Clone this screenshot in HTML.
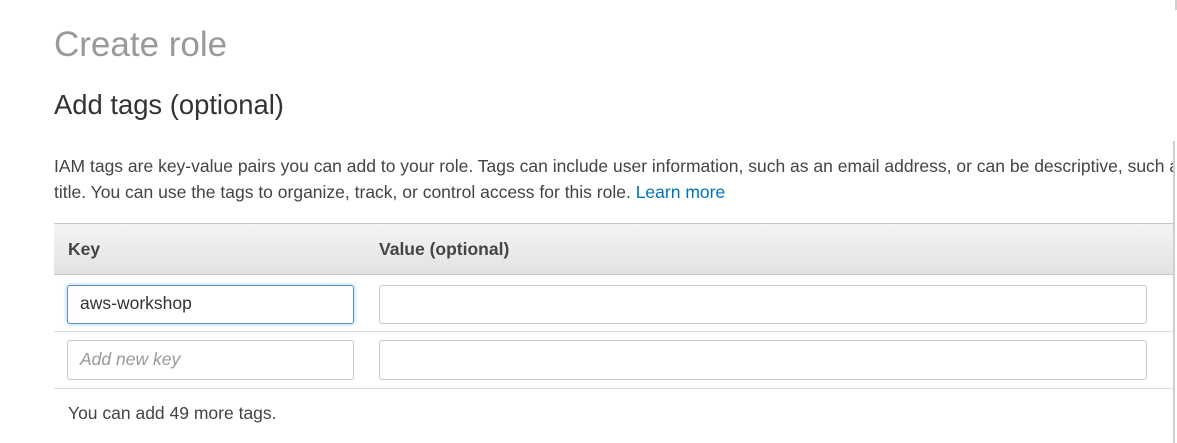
<!DOCTYPE html>
<html><head><style>
html,body{margin:0;padding:0;background:#fff;width:1177px;height:443px;overflow:hidden;font-family:"Liberation Sans",Arial,sans-serif;position:relative}
.a{position:absolute;white-space:nowrap}
.inp{position:absolute;border:1px solid #c8c8c8;border-radius:3px;background:#fff;box-sizing:border-box}
.hr{position:absolute;left:54px;width:1119px;height:1px;background:#dcdcdc}
</style></head><body>
<div class="a" style="left:54px;top:25px;font-size:35px;color:#999">Create role</div>
<div class="a" style="left:54px;top:89px;font-size:27.4px;color:#333">Add tags (optional)</div>
<div style="position:absolute;left:54px;top:153px;width:1119px;overflow:hidden;font-size:17.5px;color:#444;line-height:26px;white-space:nowrap">IAM tags are key-value pairs you can add to your role. Tags can include user information, such as an email address, or can be descriptive, such as a job<br>title. You can use the tags to organize, track, or control access for this role. <span style="color:#0073bb">Learn more</span></div>
<div style="position:absolute;left:54px;top:223px;width:1119px;height:52px;box-sizing:border-box;border-top:1px solid #c6c6c6;border-bottom:1px solid #c6c6c6;background:linear-gradient(#f3f3f3,#e3e3e3)"></div>
<div class="a" style="left:68px;top:239px;font-size:17.5px;font-weight:bold;color:#444">Key</div>
<div class="a" style="left:379px;top:239px;font-size:17.5px;font-weight:bold;color:#444">Value (optional)</div>
<div class="inp" style="left:67px;top:285px;width:287px;height:39px;border-color:#5a8fc8;box-shadow:0 0 4px rgba(0,115,187,.4)"></div>
<div class="a" style="left:80px;top:293px;font-size:17.5px;color:#333">aws-workshop</div>
<div class="inp" style="left:379px;top:285px;width:768px;height:39px"></div>
<div class="hr" style="top:331px"></div>
<div class="inp" style="left:67px;top:340px;width:287px;height:40px"></div>
<div class="a" style="left:80px;top:349px;font-size:17.5px;color:#999;font-style:italic">Add new key</div>
<div class="inp" style="left:379px;top:340px;width:768px;height:40px"></div>
<div class="hr" style="top:388px"></div>
<div class="a" style="left:68px;top:403px;font-size:17.5px;color:#444">You can add 49 more tags.</div>
<div style="position:absolute;left:1173px;top:141px;width:2px;height:302px;background:#cfcfcf"></div>
<div style="position:absolute;left:1175px;top:0;width:2px;height:10px;background:#cfcfcf"></div>
</body></html>
